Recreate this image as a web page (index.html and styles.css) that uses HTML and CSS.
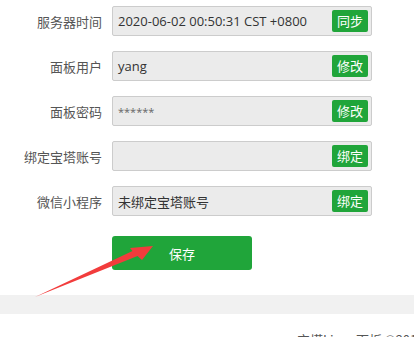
FILE: index.html
```html
<!DOCTYPE html>
<html lang="zh-CN">
<head>
<meta charset="utf-8">
<link rel="stylesheet" href="styles.css">
</head>
<body>
<div class="page">
  <div class="form">
    <div class="row">
      <label class="label">服务器时间</label>
      <div class="box"><span class="val">2020-06-02 00:50:31 CST +0800</span><button class="btn">同步</button></div>
    </div>
    <div class="row">
      <label class="label">面板用户</label>
      <div class="box"><span class="val">yang</span><button class="btn">修改</button></div>
    </div>
    <div class="row">
      <label class="label">面板密码</label>
      <div class="box"><span class="val pw">******</span><button class="btn">修改</button></div>
    </div>
    <div class="row">
      <label class="label">绑定宝塔账号</label>
      <div class="box"><span class="val"></span><button class="btn">绑定</button></div>
    </div>
    <div class="row">
      <label class="label">微信小程序</label>
      <div class="box"><span class="val">未绑定宝塔账号</span><button class="btn">绑定</button></div>
    </div>
    <div class="actions">
      <button class="save">保存</button>
    </div>
  </div>
  <div class="band"></div>
  <div class="footer">宝塔Linux面板 ©2014-2020 宝塔(bt.cn)</div>
  <svg class="arrow" width="414" height="337" viewBox="0 0 414 337">
    <polygon points="35,297 132.5,251 130,248 153,246 142,260 137.5,256" fill="#f23c3c"/>
  </svg>
</div>
</body>
</html>
```
FILE: styles.css
```css
html, body {
  margin: 0;
  padding: 0;
  background: #fff;
}
body {
  font-family: "Open Sans", "Noto Sans CJK SC", sans-serif;
  font-size: 13px;
  color: #333;
  overflow: hidden;
}
.page {
  position: relative;
  width: 414px;
  height: 337px;
  overflow: hidden;
}
.form {
  display: flex;
  flex-direction: column;
  gap: 15px;
  padding-top: 6px;
}
.row {
  display: flex;
  align-items: center;
  height: 30px;
}
.label {
  width: 102px;
  margin-right: 10px;
  text-align: right;
  color: #555;
  font-size: 13px;
  font-family: "Noto Sans CJK SC", sans-serif;
}
.box {
  box-sizing: border-box;
  width: 260px;
  height: 30px;
  background: #ebebeb;
  border: 1px solid #cccccc;
  border-radius: 2px;
  display: flex;
  align-items: center;
  justify-content: space-between;
  padding: 0 3px 0 5px;
}
.val {
  font-size: 13px;
  color: #333;
  font-family: "Open Sans", "Noto Sans CJK SC", sans-serif;
}
.pw {
  font-size: 11px;
  color: #666;
}
.btn {
  width: 36px;
  height: 22px;
  border: 0;
  border-radius: 2px;
  background: #20a53a;
  color: #fff;
  font-family: "Noto Sans CJK SC", sans-serif;
  font-size: 13px;
  padding: 0;
  line-height: 22px;
}
.actions {
  padding-left: 112px;
  margin-top: 5px;
}
.save {
  width: 140px;
  height: 34px;
  border: 0;
  border-radius: 3px;
  background: #20a53a;
  color: #fff;
  font-family: "Noto Sans CJK SC", sans-serif;
  font-size: 13px;
  padding: 0;
}
.band {
  height: 19px;
  background: #f1f1f1;
  margin-top: 25px;
}
.footer {
  padding-top: 16px;
  padding-left: 297px;
  white-space: nowrap;
  font-family: "Noto Sans CJK SC", sans-serif;
  font-size: 13px;
  color: #555;
  line-height: 20px;
}
.arrow {
  position: absolute;
  left: 0;
  top: 0;
  pointer-events: none;
}
```
